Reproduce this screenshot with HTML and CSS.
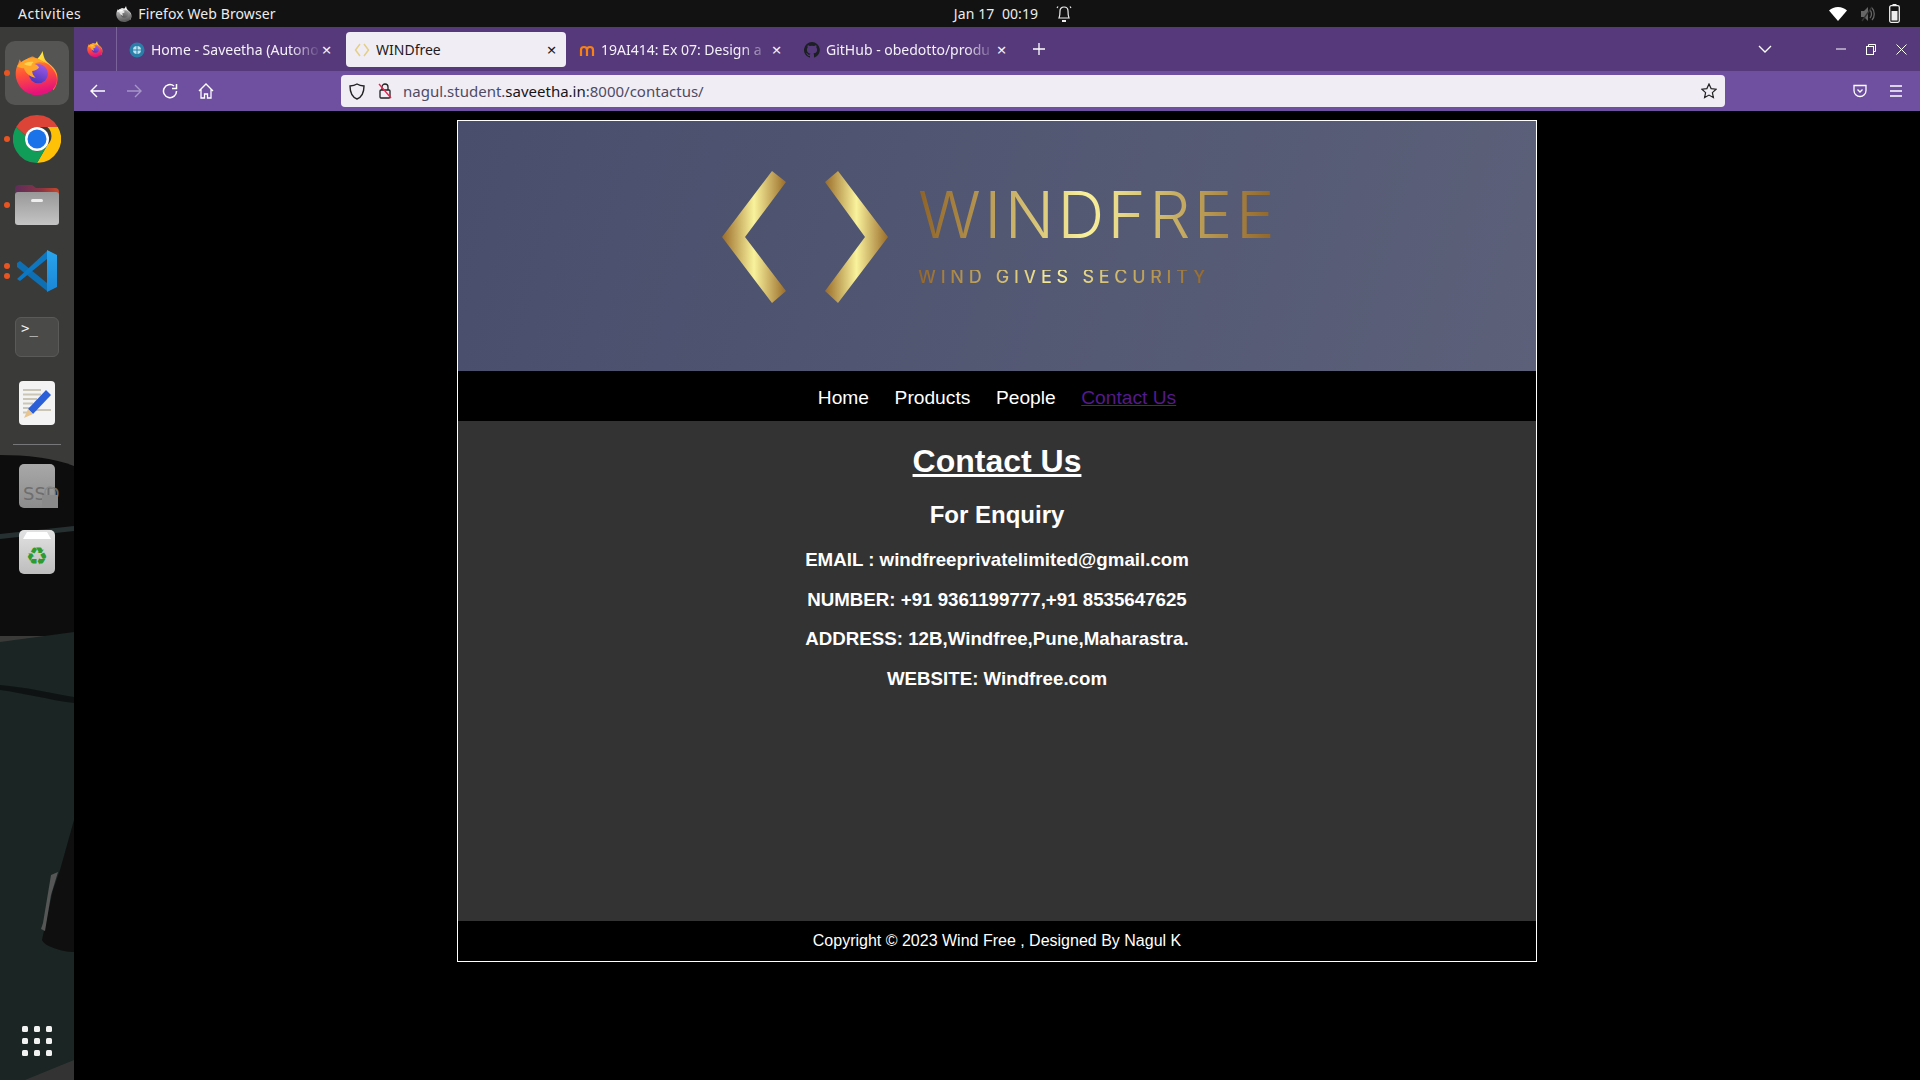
FILE: index.html
```html
<!DOCTYPE html>
<html lang="en">
	<head>
		<meta charset="UTF-8" />
		<meta name="viewport" content="initial-scale=1,width=device-width" />
		<title>WINDfree</title>
		<link rel="stylesheet" href="styles.css">
	</head>

	<body>
		<svg class="defs" width="0" height="0" aria-hidden="true">
			<defs>
				<linearGradient id="fx-body" x1="0" y1="0" x2="0.2" y2="1">
					<stop offset="0" stop-color="#ff9a2a" />
					<stop offset="0.5" stop-color="#ff4f3a" />
					<stop offset="1" stop-color="#e5127c" />
				</linearGradient>
				<linearGradient id="fx-flame" x1="0.2" y1="0" x2="0.6" y2="1">
					<stop offset="0" stop-color="#fff044" />
					<stop offset="0.55" stop-color="#ffb02a" />
					<stop offset="1" stop-color="#ff6a30" />
				</linearGradient>
				<linearGradient id="fx-globe" x1="0.7" y1="0" x2="0.3" y2="1">
					<stop offset="0" stop-color="#a05ae8" />
					<stop offset="1" stop-color="#4a34b8" />
				</linearGradient>
				<linearGradient id="gold-left" gradientUnits="userSpaceOnUse" x1="0" y1="0" x2="64" y2="0">
					<stop offset="0" stop-color="#9a6c2a" />
					<stop offset="0.5" stop-color="#f9f29c" />
					<stop offset="1" stop-color="#9a6c2a" />
				</linearGradient>
				<linearGradient id="gold-right" gradientUnits="userSpaceOnUse" x1="103" y1="0" x2="166" y2="0">
					<stop offset="0" stop-color="#9a6c2a" />
					<stop offset="0.5" stop-color="#f9f29c" />
					<stop offset="1" stop-color="#9a6c2a" />
				</linearGradient>
				<linearGradient id="vs-side" x1="0" y1="0" x2="0" y2="1">
					<stop offset="0" stop-color="#2aa5ee" />
					<stop offset="1" stop-color="#1a86d6" />
				</linearGradient>
				<linearGradient id="folder-back" x1="0" y1="0" x2="1" y2="0">
					<stop offset="0" stop-color="#5e2d5a" />
					<stop offset="0.6" stop-color="#8a3442" />
					<stop offset="1" stop-color="#c9472a" />
				</linearGradient>
				<linearGradient id="folder-front" x1="0" y1="0" x2="0" y2="1">
					<stop offset="0" stop-color="#989898" />
					<stop offset="1" stop-color="#c4c4c4" />
				</linearGradient>
				<symbol id="firefox" viewBox="0 0 64 64">
					<path fill="url(#fx-flame)" d="M40 0c2 8 2 12 8 17 6 5 11 9 13 16 2 9 0 18-5 24L30 14C34 10 38 6 40 0z" />
					<path fill="url(#fx-body)" d="M32 64C15 64 1 50 1 33c0-5 1-9 3-13l3-8c1 3 2 5 4 6 3-5 9-9 15-10l22 11c7 6 13 14 13 23 0 12-13 22-29 22z" />
					<circle cx="34" cy="33" r="14" fill="url(#fx-globe)" />
					<path fill="#ffa62b" d="M3 22C8 15 17 10 27 10c7 0 12 3 16 8-6-3-11-2-15 1 3 1 6 2 7 5-2 3-7 5-10 5 0 4 2 7 5 10-9-2-15-7-17-14-3 0-7-1-10-3z" />
					<path fill="#ffd34e" d="M13 19c4-3 9-4 14-3-2 2-3 3-3 5-4 1-8 0-11-2z" />
				</symbol>
			</defs>
		</svg>

		<div class="desktop">
			<header class="topbar">
				<div class="topbar-left">
					<span class="topbar-text topbar-text_wide">Activities</span>
					<span class="topbar-app">
						<svg class="icon-gray" width="16" height="16"><use href="#firefox" /></svg>
						<span class="topbar-text">Firefox Web Browser</span>
					</span>
				</div>
				<div class="topbar-center">
					<span class="topbar-text">Jan 17&nbsp; 00:19</span>
					<svg width="16" height="18" viewBox="0 0 16 18" fill="none" stroke="#eee" stroke-width="1.2">
						<path d="M3 13c1-2 1-4 1-7 0-2.500 1.800-4 4-4s4 1.500 4 4c0 3 0 5 1 7z" />
						<path d="M2 1.500 1 3M14 1.500 15 3" />
						<path d="M6 16h4" stroke-width="2" />
					</svg>
				</div>
				<div class="topbar-right">
					<svg width="18" height="14" viewBox="0 0 18 14"><path fill="#fff" d="M0 3.500C2.500 1.500 5.500 0 9 0s6.500 1.500 9 3.500L9 14z" /></svg>
					<svg width="16" height="16" viewBox="0 0 16 16" fill="#666"><path d="M1 5h3l4-4v14l-4-4H1z" /><path d="M10 4c2 2 2 6 0 8M12 2c3 3 3 9 0 12" fill="none" stroke="#666" stroke-width="1.300" /><path d="M2 15 12 1" stroke="#333" stroke-width="1.300" /></svg>
					<svg width="11" height="19" viewBox="0 0 11 19"><rect x="3.500" y="0" width="4" height="2" fill="#eee" /><rect x="0.700" y="1.700" width="9.600" height="16.600" rx="1.500" fill="none" stroke="#eee" stroke-width="1.300" /><rect x="2.500" y="7" width="6" height="9.500" fill="#eee" /></svg>
				</div>
			</header>

			<div class="workspace">
				<nav class="dock">
					<svg class="dock-wallpaper" width="74" height="1053" viewBox="0 27 74 1053" preserveAspectRatio="none" aria-hidden="true">
						<rect x="0" y="27" width="74" height="1053" fill="#3a3a38" />
						<path fill="#0d0d0d" d="M0 455c25 0 55 3 74 11v170H0z" />
						<path fill="#263030" d="M0 534l74-8v5l-74 8z" />
						<path fill="#1a2524" d="M0 642l74-10v448H0z" />
						<path fill="#0e1212" d="M0 685c25 2 50 8 74 12v6c-25-3-50-10-74-13z" />
						<path fill="#0f0f0f" d="M74 820 60 870l-7 20-11 50c2 6 20 12 32 12z" />
						<path fill="#565656" d="M58 872l-7 3-8 48-2 6 4 2 6-36z" />
						<path fill="#333" d="M25 1080l49-20v20z" />
					</svg>

					<div class="dock-item dock-item_active">
						<span class="dock-dots"><i></i></span>
						<svg width="44" height="44"><use href="#firefox" /></svg>
					</div>
					<div class="dock-item">
						<span class="dock-dots"><i></i></span>
						<svg width="48" height="48" viewBox="0 0 48 48">
							<path fill="#db4437" d="M24 0a24 24 0 0 1 20.800 12H24a12 12 0 0 0-11.500 8.500L3.200 12A24 24 0 0 1 24 0z" />
							<path fill="#ffc107" d="M44.800 12A24 24 0 0 1 24 48l10.400-18a12 12 0 0 0 0-18z" />
							<path fill="#0f9d58" d="M3.200 12A24 24 0 0 0 24 48l10.400-18a12 12 0 0 1-21.900-9.500z" />
							<circle cx="24" cy="24" r="12" fill="#fff" />
							<circle cx="24" cy="24" r="9.500" fill="#1a73e8" />
						</svg>
					</div>
					<div class="dock-item">
						<span class="dock-dots"><i></i></span>
						<svg width="44" height="42" viewBox="0 0 44 42">
							<path fill="url(#folder-back)" d="M0 5a4 4 0 0 1 4-4h13l4 3h19a4 4 0 0 1 4 4v10H0z" />
							<rect y="8" width="44" height="33" rx="3" fill="url(#folder-front)" />
							<rect x="16" y="15" width="12" height="3" rx="1.500" fill="#eee" />
						</svg>
					</div>
					<div class="dock-item">
						<span class="dock-dots"><i></i><i></i></span>
						<svg width="42" height="42" viewBox="0 0 42 42">
							<path fill="#0e6fb3" d="M1 13 4 11 31 33 31 41 1 17z" />
							<path fill="#0e77c2" d="M1 29 31 1 31 9 4 31z" />
							<path fill="url(#vs-side)" d="M31 0 41 5V37L31 42z" />
						</svg>
					</div>
					<div class="dock-item">
						<div class="terminal-tile"><span class="terminal-prompt">&gt;_</span></div>
					</div>
					<div class="dock-item">
						<svg width="36" height="44" viewBox="0 0 36 44">
							<rect width="36" height="44" rx="4" fill="#f3f3f3" />
							<path stroke="#cbc5b6" stroke-width="2" d="M4 9h18M4 13.500h18M4 18h14M4 22.500h10M4 27h10M14 29h18M4 31.500h6" />
							<path fill="#2a5fd8" d="M27 9 32 14 14 33 9 28z" />
							<path fill="#e8c48e" d="M9 28 14 33 5 37z" />
						</svg>
					</div>
					<hr class="dock-sep">
					<div class="dock-item">
						<div class="drive-tile">
							<span class="drive-label">SSD</span>
							<svg class="drive-lock" width="16" height="22" viewBox="0 0 16 22">
								<path d="M3 10V6a5 5 0 0 1 10 0v4" fill="none" stroke="#888" stroke-width="1.500" />
								<rect y="9" width="16" height="13" fill="#8a8a8a" />
							</svg>
						</div>
					</div>
					<div class="dock-item">
						<div class="trash-tile">
							<svg class="trash-lid" width="30" height="9" viewBox="0 0 30 9"><path fill="#fff" d="M5 1h20l4 7H1z" /></svg>
							<span class="trash-glyph">♻</span>
						</div>
					</div>
					<div class="dock-grid">
						<i></i><i></i><i></i><i></i><i></i><i></i><i></i><i></i><i></i>
					</div>
				</nav>

				<div class="browser">
					<div class="tabstrip">
						<div class="view-btn">
							<svg width="16" height="18"><use href="#firefox" /></svg>
						</div>
						<div class="tab">
							<svg class="tab-icon" width="16" height="16" viewBox="0 0 16 16"><circle cx="8" cy="8" r="7.500" fill="#2a7fa8" /><circle cx="8" cy="8" r="4" fill="#bfe3ef" /><path d="M3 8h10M8 3v10" stroke="#2a7fa8" /></svg>
							<span class="tab-title tab-title_fade">Home - Saveetha (Autono</span>
							<span class="tab-close">×</span>
						</div>
						<div class="tab tab_active">
							<svg class="tab-icon" width="16" height="16" viewBox="0 0 16 16" fill="none" stroke="#e3cf85" stroke-width="1.500"><path d="M6 2 1.500 8 6 14M10 2l4.500 6L10 14" /></svg>
							<span class="tab-title">WINDfree</span>
							<span class="tab-close">×</span>
						</div>
						<div class="tab">
							<svg class="tab-icon" width="16" height="16" viewBox="0 0 16 16" fill="none" stroke="#f98012" stroke-width="2.200"><path d="M2 14V8a3 3 0 0 1 6 0v6M8 8a3 3 0 0 1 6 0v6" /></svg>
							<span class="tab-title tab-title_fade">19AI414: Ex 07: Design a</span>
							<span class="tab-close">×</span>
						</div>
						<div class="tab">
							<svg class="tab-icon" width="16" height="16" viewBox="0 0 16 16"><path fill="#1b1f23" d="M8 0a8 8 0 0 0-2.500 15.600c.4.100.5-.2.500-.4v-1.400c-2.200.5-2.700-1-2.700-1-.4-.9-.9-1.200-.9-1.200-.7-.5.100-.5.100-.5.800.1 1.200.8 1.200.8.700 1.200 1.900.9 2.300.7.100-.5.300-.9.500-1.100-1.800-.2-3.600-.9-3.600-4 0-.9.300-1.600.8-2.100-.1-.2-.4-1 .1-2.100 0 0 .7-.2 2.200.8a7.600 7.600 0 0 1 4 0c1.500-1 2.200-.8 2.200-.8.500 1.100.2 1.900.1 2.100.5.600.8 1.300.8 2.100 0 3.100-1.900 3.700-3.700 3.900.3.300.6.800.6 1.500v2.200c0 .2.100.5.600.4A8 8 0 0 0 8 0z" /></svg>
							<span class="tab-title tab-title_fade">GitHub - obedotto/produ</span>
							<span class="tab-close">×</span>
						</div>
						<svg class="tab-plus" width="12" height="12" viewBox="0 0 12 12"><path d="M6 0v12M0 6h12" stroke="#fff" stroke-width="1.300" /></svg>
						<svg class="tab-list" width="14" height="8" viewBox="0 0 14 8" fill="none" stroke="#fff" stroke-width="1.300"><path d="M1 1l6 6 6-6" /></svg>
						<div class="win-controls">
							<svg width="10" height="10" viewBox="0 0 10 10"><path d="M0 5h10" stroke="#fff" /></svg>
							<svg width="10" height="11" viewBox="0 0 10 11" fill="none" stroke="#fff"><path d="M2.500 2.500V.5h7v7H7.500" /><rect x=".5" y="2.500" width="7" height="8" /></svg>
							<svg width="11" height="11" viewBox="0 0 11 11"><path d="M.5.5l10 10M10.500.5l-10 10" stroke="#fff" /></svg>
						</div>
					</div>

					<div class="toolbar">
						<div class="nav-buttons">
							<svg width="16" height="14" viewBox="0 0 16 14" fill="none" stroke="#fff" stroke-width="1.400"><path d="M15 7H1.500M7 1 1 7l6 6" /></svg>
							<svg width="16" height="14" viewBox="0 0 16 14" fill="none" stroke="#a896c6" stroke-width="1.400"><path d="M1 7h13.500M9 1l6 6-6 6" /></svg>
							<svg width="16" height="16" viewBox="0 0 16 16" fill="none" stroke="#fff" stroke-width="1.500"><path d="M14.500 8A6.500 6.500 0 1 1 12 3" /><path d="M14.500 1v4.500H10" /></svg>
							<svg width="16" height="16" viewBox="0 0 16 16" fill="none" stroke="#fff" stroke-width="1.300"><path d="M1 8l7-7 7 7M3 6.500V15h3.500v-4h3v4H13V6.500" /></svg>
						</div>
						<div class="urlbar">
							<svg class="url-shield" width="16" height="17" viewBox="0 0 16 17" fill="none" stroke="#222" stroke-width="1.400"><path d="M8 1c2 1.200 4 1.800 7 2 0 6-2 11-7 13C3 14 1 9 1 3c3-.2 5-.8 7-2z" /></svg>
							<svg class="url-lock" width="14" height="16" viewBox="0 0 14 16" fill="none" stroke="#222" stroke-width="1.300"><rect x="2" y="7" width="10" height="8" rx="1" /><path d="M4 7V4a3 3 0 0 1 6 0v3" /><path d="M1 1l12 14" stroke="#e22850" /></svg>
							<span class="url-text"><span class="url-host">nagul.student.</span><span class="url-domain">saveetha.in</span><span class="url-host">:8000/contactus/</span></span>
							<svg class="url-star" width="16" height="16" viewBox="0 0 16 16" fill="none" stroke="#222" stroke-width="1.200"><path d="M8 1l2.100 4.600 5 .6-3.700 3.400 1 5L8 12.100 3.600 14.600l1-5L.9 6.200l5-.6z" /></svg>
						</div>
						<div class="tool-right">
							<svg width="14" height="14" viewBox="0 0 14 14" fill="none" stroke="#fff" stroke-width="1.300"><path d="M1 1.500h12v5a6 6 0 0 1-12 0z" /><path d="M4.500 5.500 7 8l2.500-2.500" /></svg>
							<svg width="14" height="12" viewBox="0 0 14 12" stroke="#fff" stroke-width="1.300"><path d="M1 1h12M1 6h12M1 11h12" /></svg>
						</div>
					</div>

					<div class="viewport">
						<div class="site">
							<div class="banner">
								<div class="logo">
									<svg class="logo-mark" width="166" height="132" viewBox="0 0 166 132">
										<polygon fill="url(#gold-left)" points="50,0 64,11 23,66 64,120 50,132 0,66" />
										<polygon fill="url(#gold-right)" points="116,0 103,11 143,66 103,120 116,132 166,66" />
									</svg>
									<div class="logo-text">
										<div class="logo-name">WINDFREE</div>
										<div class="logo-tagline">WIND GIVES SECURITY</div>
									</div>
								</div>
							</div>
							<nav class="site-nav">
								<a class="site-link" href="#home">Home</a>
								<a class="site-link" href="#products">Products</a>
								<a class="site-link" href="#people">People</a>
								<a class="site-link site-link_current" href="#contact">Contact Us</a>
							</nav>
							<main class="site-main">
								<h1 class="site-title">Contact Us</h1>
								<h2 class="site-subtitle">For Enquiry</h2>
								<h3 class="site-line">EMAIL : windfreeprivatelimited@gmail.com</h3>
								<h3 class="site-line">NUMBER: +91 9361199777,+91 8535647625</h3>
								<h3 class="site-line">ADDRESS: 12B,Windfree,Pune,Maharastra.</h3>
								<h3 class="site-line">WEBSITE: Windfree.com</h3>
							</main>
							<footer class="site-footer">Copyright © 2023 Wind Free , Designed By Nagul K</footer>
						</div>
					</div>
				</div>
			</div>
		</div>
	</body>
</html>
```

FILE: styles.css
```css
html {
	box-sizing: border-box;
}

*,
*::after,
*::before {
	box-sizing: inherit;
}

body {
	margin: 0;
	background-color: #000;
	font-family: "Liberation Sans", Arial, sans-serif;
	-webkit-font-smoothing: antialiased;
}

.defs {
	display: block;
	height: 0;
}

.desktop {
	display: grid;
	grid-template-rows: 27px 1fr;
	width: 1920px;
	height: 1080px;
	overflow: hidden;
}

/* gnome top bar */
.topbar {
	display: grid;
	grid-template-columns: 1fr auto 1fr;
	align-items: center;
	padding: 0 20px 0 18px;
	background-color: #121212;
}

.topbar-text {
	font-family: "Noto Sans", sans-serif;
	font-size: 14px;
	letter-spacing: 0.100px;
	color: #ececec;
}

.topbar-text_wide {
	letter-spacing: 0.500px;
}

.topbar-left {
	display: flex;
	align-items: center;
	gap: 35px;
}

.topbar-app {
	display: flex;
	align-items: center;
	gap: 6px;
}

.icon-gray {
	filter: grayscale(1) brightness(1.3);
}

.topbar-center {
	display: flex;
	align-items: center;
	gap: 18px;
	margin-right: -108px;
}

.topbar-right {
	display: flex;
	align-items: center;
	justify-content: flex-end;
	gap: 13px;
}

.workspace {
	display: grid;
	grid-template-columns: 74px 1fr;
	min-height: 0;
}

/* dock */
.dock {
	position: relative;
	display: flex;
	flex-direction: column;
	align-items: center;
	padding-top: 13px;
}

.dock-wallpaper {
	position: absolute;
	top: 0;
	left: 0;
}

.dock-item {
	position: relative;
	display: flex;
	align-items: center;
	justify-content: center;
	flex: none;
	width: 64px;
	height: 66px;
}

.dock-item_active::before {
	content: "";
	position: absolute;
	top: 1px;
	left: 0;
	width: 64px;
	height: 64px;
	background-color: #555553;
	border-radius: 10px;
}

.dock-item svg {
	position: relative;
}

.dock-dots {
	position: absolute;
	top: 0;
	bottom: 0;
	left: -1px;
	display: flex;
	flex-direction: column;
	justify-content: center;
	gap: 4px;
}

.dock-dots i {
	display: block;
	width: 6px;
	height: 6px;
	background-color: #e95420;
	border-radius: 50%;
}

.terminal-tile {
	position: relative;
	width: 44px;
	height: 40px;
	padding: 1px 5px;
	background-color: #4a4a48;
	border: 1px solid #5a5a58;
	border-radius: 6px;
}

.terminal-prompt {
	font-family: "DejaVu Sans Mono", monospace;
	font-size: 14px;
	color: #f2f2f2;
}

.dock-sep {
	position: relative;
	flex: none;
	width: 48px;
	height: 1px;
	margin: 8px 0;
	background-color: #77777a;
	border: 0;
}

.drive-tile {
	position: relative;
	width: 36px;
	height: 44px;
	background-image: linear-gradient(#a8a8a8, #8c8c8c);
	border-radius: 5px;
}

.drive-label {
	position: absolute;
	top: 19px;
	left: 4px;
	font-family: "DejaVu Sans", sans-serif;
	font-size: 18px;
	line-height: 22px;
	color: #6e6e6e;
}

.dock-item .drive-lock {
	position: absolute;
	top: 22px;
	left: 23px;
}

.trash-tile {
	position: relative;
	display: flex;
	justify-content: center;
	width: 36px;
	height: 44px;
	background-image: linear-gradient(#e2e2e2, #bdbdbd);
	border-radius: 5px;
}

.dock-item .trash-lid {
	position: absolute;
	top: 1px;
	left: 3px;
}

.trash-glyph {
	position: absolute;
	top: 13px;
	font-family: "DejaVu Sans", sans-serif;
	font-size: 25px;
	line-height: 28px;
	color: #2e9b2e;
}

.dock-grid {
	position: relative;
	display: grid;
	grid-template-columns: repeat(3, 6px);
	gap: 6px;
	margin-top: auto;
	margin-bottom: 24px;
}

.dock-grid i {
	display: block;
	width: 6px;
	height: 6px;
	background-color: #f2f2f2;
	border-radius: 1.500px;
}

/* firefox */
.browser {
	display: grid;
	grid-template-rows: 44px 40px 1fr;
	min-width: 0;
}

.tabstrip {
	display: flex;
	align-items: center;
	gap: 5px;
	background-color: #56397b;
}

.view-btn {
	display: flex;
	align-items: center;
	justify-content: center;
	flex: none;
	width: 43px;
	height: 44px;
	margin-right: -1px;
	border-right: 1px solid #7a639b;
}

.tab {
	display: flex;
	align-items: center;
	flex: none;
	width: 220px;
	height: 35px;
	margin-top: 1px;
	padding: 0 9px 0 8px;
	font-family: "Noto Sans", sans-serif;
	font-size: 14px;
	color: #f4f0f8;
	border-radius: 4px;
}

.tab_active {
	color: #1c1b22;
	background-color: #f1edf5;
}

.tab-icon {
	flex: none;
	margin-right: 6px;
}

.tab-title {
	flex: 1;
	min-width: 0;
	overflow: hidden;
	white-space: nowrap;
}

.tab-title_fade {
	-webkit-mask-image: linear-gradient(to right, #000 82%, transparent);
	mask-image: linear-gradient(to right, #000 82%, transparent);
}

.tab-close {
	flex: none;
	width: 11px;
	font-size: 17px;
	line-height: 16px;
	text-align: center;
}

.tab-plus {
	flex: none;
	margin-left: 12px;
}

.tab-list {
	flex: none;
	margin-left: auto;
}

.win-controls {
	display: flex;
	align-items: center;
	gap: 20px;
	margin-left: 59px;
	padding-right: 13px;
}

.toolbar {
	display: flex;
	align-items: center;
	background-color: #6f50a0;
}

.nav-buttons {
	display: grid;
	grid-template-columns: repeat(4, 36px);
	justify-items: center;
	align-items: center;
	margin-left: 6px;
	width: 144px;
}

.urlbar {
	display: flex;
	align-items: center;
	flex: none;
	width: 1384px;
	height: 32px;
	margin-left: 117px;
	padding: 0 8px 0 8px;
	background-color: #f1edf5;
	border-radius: 4px;
}

.url-lock {
	flex: none;
	margin-left: 13px;
}

.url-shield {
	flex: none;
}

.url-text {
	margin-left: 11px;
	font-family: "Noto Sans", sans-serif;
	font-size: 15px;
}

.url-host {
	color: #4d4b63;
}

.url-domain {
	color: #15141a;
}

.url-star {
	margin-left: auto;
}

.tool-right {
	display: flex;
	align-items: center;
	gap: 22px;
	margin-left: 128px;
}

.viewport {
	padding-top: 9px;
	background-color: #000;
}

/* the page itself */
.site {
	display: flex;
	flex-direction: column;
	width: 1080px;
	height: 842px;
	margin-left: 383px;
	border: 1px solid #fff;
	color: #fff;
}

.banner {
	display: flex;
	align-items: center;
	justify-content: center;
	height: 250px;
	padding: 0 0 18px 6px;
	background-image: linear-gradient(105deg, #484e6c, #5c6079);
}

.logo {
	display: flex;
	align-items: center;
	gap: 30px;
}

.logo-text {
	display: flex;
	flex-direction: column;
	gap: 32px;
}

.logo-name {
	width: max-content;
	font-family: Inter, sans-serif;
	font-size: 65px;
	font-weight: 300;
	line-height: 47px;
	letter-spacing: 3.400px;
	white-space: nowrap;
	background-image: linear-gradient(to right, #8e6227, #f9f09c 47%, #8e6227);
	-webkit-background-clip: text;
	background-clip: text;
	color: transparent;
}

.logo-tagline {
	width: max-content;
	font-family: Inter, sans-serif;
	font-size: 18px;
	font-weight: 500;
	line-height: 14px;
	letter-spacing: 4.700px;
	white-space: nowrap;
	background-image: linear-gradient(to right, #91652a, #f9f09c 47%, #91652a);
	-webkit-background-clip: text;
	background-clip: text;
	color: transparent;
}

.site-nav {
	display: flex;
	align-items: center;
	justify-content: center;
	gap: 25.600px;
	height: 50px;
	padding-top: 3px;
	background-color: #000;
}

.site-link {
	font-size: 19.200px;
	color: #fff;
	text-decoration: none;
}

.site-link_current {
	color: #551a8b;
	text-decoration: underline;
}

.site-main {
	flex: 1;
	text-align: center;
	background-color: #333;
	overflow: hidden;
}

.site-title {
	margin: 21.500px 0;
	font-size: 32px;
	text-decoration: underline;
}

.site-subtitle {
	margin: 19.920px 0;
	font-size: 24px;
}

.site-line {
	margin: 17.600px 0;
	font-size: 18.720px;
}

.site-footer {
	flex: none;
	height: 40px;
	font-size: 16px;
	line-height: 40px;
	text-align: center;
	background-color: #000;
}
```
